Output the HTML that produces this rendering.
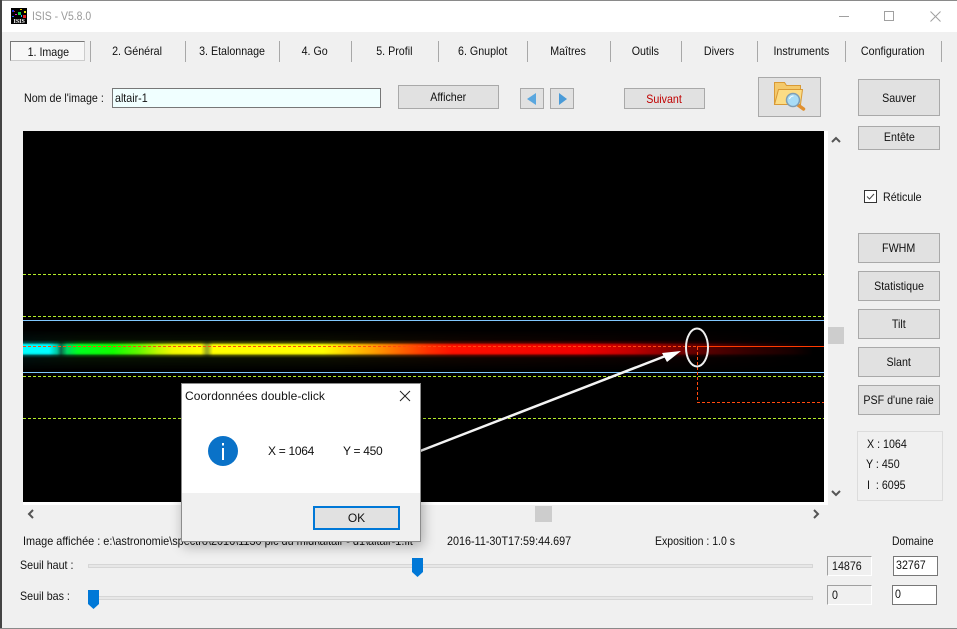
<!DOCTYPE html>
<html><head><meta charset="utf-8"><title>ISIS</title>
<style>
html,body{margin:0;padding:0;width:957px;height:629px;overflow:hidden;background:#f0f0f0}
body{position:relative;font-family:"Liberation Sans",sans-serif;font-size:12px;color:#111}
.t{position:absolute;white-space:nowrap;line-height:14px;transform:scaleX(.89);transform-origin:0 50%}
.b{position:absolute;box-sizing:border-box;background:#e1e1e1;border:1px solid #a9a9a9;text-align:center;white-space:nowrap}
.s{position:absolute;top:41px;width:1px;height:21px;background:#a8a8a8}
.c{position:absolute;white-space:nowrap;line-height:14px;text-align:center;top:44px}
.c span,.b span{display:inline-block;transform:scaleX(.89)}
.i{position:absolute;box-sizing:border-box;line-height:17px;padding-left:3px;overflow:hidden}
.i span{display:inline-block;transform:scaleX(.89);transform-origin:0 50%}
.ro{border:1px solid;border-color:#a0a0a0 #fff #fff #a0a0a0;background:#f0f0f0;padding-left:4px;padding-top:1px}
.rw{border:1px solid #777;background:#fff;padding-left:2px}
.tr{position:absolute;left:88px;width:725px;height:4px;background:#e7e7e7;border:1px solid #d6d6d6;box-sizing:border-box}
</style></head><body>
<!-- window frame -->
<div style="position:absolute;left:0;top:0;width:957px;height:1px;background:#8a8a8a"></div>
<div style="position:absolute;left:0;top:1px;width:957px;height:31px;background:#fff"></div>
<div style="position:absolute;left:0;top:0;width:2px;height:629px;background:#444"></div>
<div style="position:absolute;left:0;top:628px;width:957px;height:1px;background:#8a8a8a"></div>
<!-- app icon -->
<svg style="position:absolute;left:11px;top:8px" width="16" height="16" viewBox="0 0 16 16">
<rect width="16" height="16" fill="#000"/>
<rect x="1" y="2" width="2" height="2" fill="#2030e0"/><rect x="4" y="6" width="2" height="1" fill="#d020d0"/><rect x="9" y="1" width="2" height="1" fill="#e0c000"/>
<rect x="7" y="4" width="3" height="3" fill="#10d040"/><rect x="3" y="3" width="1" height="1" fill="#e02020"/><rect x="13" y="3" width="2" height="2" fill="#e0e000"/>
<rect x="12" y="7" width="3" height="3" fill="#e02020"/><rect x="1" y="8" width="2" height="1" fill="#2060ff"/><rect x="10" y="7" width="1" height="2" fill="#20c0ff"/>
<text x="2.5" y="15" font-size="6" font-weight="bold" fill="#fff" font-family="Liberation Serif,serif">ISIS</text>
</svg>
<div class="t" style="left:32px;top:9px;color:#9a9a9a;transform:scaleX(.87)">ISIS - V5.8.0</div>
<!-- window controls -->
<div style="position:absolute;left:839px;top:16px;width:10px;height:1px;background:#a0a0a0"></div>
<div style="position:absolute;left:884px;top:11px;width:10px;height:10px;box-sizing:border-box;border:1px solid #a0a0a0"></div>
<svg style="position:absolute;left:930px;top:11px" width="11" height="11"><path d="M.5.5l10 10M10.500.5l-10 10" stroke="#a0a0a0" fill="none"/></svg>
<!-- tabs -->
<div style="position:absolute;left:10px;top:41px;width:75px;height:20px;box-sizing:border-box;border:1px solid;border-color:#777 #ccc #ccc #777;background:#f7f7f7"></div>
<div class="c" style="left:9px;width:78px;top:45px"><span>1. Image</span></div>
<div class="s" style="left:90px"></div>
<div class="c" style="left:90px;width:95px"><span>2. Général</span></div>
<div class="s" style="left:185px"></div>
<div class="c" style="left:185px;width:94px"><span>3. Etalonnage</span></div>
<div class="s" style="left:279px"></div>
<div class="c" style="left:279px;width:72px"><span>4. Go</span></div>
<div class="s" style="left:351px"></div>
<div class="c" style="left:351px;width:87px"><span>5. Profil</span></div>
<div class="s" style="left:438px"></div>
<div class="c" style="left:438px;width:89px"><span>6. Gnuplot</span></div>
<div class="s" style="left:527px"></div>
<div class="c" style="left:527px;width:83px"><span>Maîtres</span></div>
<div class="s" style="left:610px"></div>
<div class="c" style="left:610px;width:71px"><span>Outils</span></div>
<div class="s" style="left:681px"></div>
<div class="c" style="left:681px;width:76px"><span>Divers</span></div>
<div class="s" style="left:757px"></div>
<div class="c" style="left:757px;width:88px"><span>Instruments</span></div>
<div class="s" style="left:845px"></div>
<div class="c" style="left:845px;width:96px"><span>Configuration</span></div>
<div class="s" style="left:941px"></div>
<!-- top row -->
<div class="t" style="left:24px;top:91px">Nom de l'image :</div>
<div style="position:absolute;left:112px;top:88px;width:269px;height:20px;box-sizing:border-box;border:1px solid #777;background:#f0ffff;line-height:18px;padding-left:2px"><span style="display:inline-block;transform:scaleX(.89);transform-origin:0 50%">altair-1</span></div>
<div class="b" style="left:398px;top:85px;width:101px;height:24px;line-height:22px"><span>Afficher</span></div>
<div class="b" style="left:520px;top:88px;width:24px;height:21px"><svg width="22" height="19" style="display:block"><path d="M6 10L15 4v12z" fill="#5aa7df"/></svg></div>
<div class="b" style="left:550px;top:88px;width:24px;height:21px"><svg width="22" height="19" style="display:block"><path d="M16 10L8 4v12z" fill="#4a9bd8"/></svg></div>
<div class="b" style="left:624px;top:88px;width:81px;height:21px;line-height:20px;color:#c00000"><span>Suivant</span></div>
<div class="b" style="left:758px;top:77px;width:63px;height:40px"></div>
<svg style="position:absolute;left:772px;top:80px" width="36" height="32" viewBox="0 0 36 32">
<path d="M2.500 2.500h10l2 3h14v19h-26z" fill="#f4c96b" stroke="#d99a35"/>
<path d="M2.500 24.500L6.500 9.500h24l-2 15z" fill="#fbdc85" stroke="#d99a35"/>
<path d="M26 25l5.500 4" stroke="#e09030" stroke-width="3.500" stroke-linecap="round"/>
<circle cx="21" cy="20" r="6.500" fill="#a8dcf6" stroke="#7f9db3" stroke-width="1.500"/>
<path d="M17.500 19a4 4 0 0 1 4-3" stroke="#fff" fill="none"/>
</svg>
<div class="b" style="left:858px;top:79px;width:82px;height:37px;line-height:36px"><span>Sauver</span></div>
<div class="b" style="left:858px;top:126px;width:82px;height:24px;line-height:21px"><span>Entête</span></div>
<!-- image -->
<div style="position:absolute;left:23px;top:131px;width:805px;height:374px;background:#fff"></div>
<div style="position:absolute;left:23px;top:131px;width:801px;height:371px;background:#000;overflow:hidden">
<div style="position:absolute;left:0;top:199px;width:801px;height:40px;background:linear-gradient(90deg,#001a18 0,#0a1d04 60px,#141800 300px,#1a0600 450px,#100000 650px,#000 780px);-webkit-mask-image:linear-gradient(180deg,transparent 0,#000 50%,transparent 100%);mask-image:linear-gradient(180deg,transparent 0,#000 50%,transparent 100%)"></div>
<div style="position:absolute;left:0;top:209px;width:801px;height:18px;background:linear-gradient(90deg,#00ffff 0,#00ffff 26px,#00c8a0 34px,#0a6a4a 38px,#00d860 44px,#00ff20 55px,#10ff00 90px,#60f800 115px,#c0f800 135px,#f0f800 150px,#ffff00 178px,#a0b020 183px,#a0b020 185px,#ffff00 190px,#ffff00 300px,#ffd000 325px,#ffa000 350px,#ff6000 380px,#ff3000 405px,#ff1000 430px,#f00000 560px,#c00000 610px,#800000 650px,#5a0000 680px,#300000 730px,#160000 770px,#000 790px);-webkit-mask-image:linear-gradient(180deg,transparent 0,rgba(0,0,0,.25) 15%,rgba(0,0,0,.9) 26%,#000 32%,#000 68%,rgba(0,0,0,.9) 76%,rgba(0,0,0,.25) 86%,transparent 100%);mask-image:linear-gradient(180deg,transparent 0,rgba(0,0,0,.25) 15%,rgba(0,0,0,.9) 26%,#000 32%,#000 68%,rgba(0,0,0,.9) 76%,rgba(0,0,0,.25) 86%,transparent 100%)"></div>
</div>
<svg style="position:absolute;left:0;top:0" width="957" height="629">
<g stroke="#b4ee28" stroke-width="1" stroke-dasharray="3 2" fill="none">
<path d="M23 274.500H824M23 316.500H824M23 376.500H824M23 418.500H824"/></g>
<path d="M23 320.500H824M23 372.500H824" stroke="#80c8ff" stroke-width="1"/>
<path d="M23 346.500H697" stroke="#ff4a10" stroke-dasharray="3 2"/>
<path d="M697 346.500H824" stroke="#ff3a00"/>
<path d="M697.500 347V402.500H824" stroke="#ff4a10" stroke-dasharray="3 2" fill="none"/>
<ellipse cx="697" cy="347.500" rx="11" ry="19" fill="none" stroke="#eee" stroke-width="2"/>
<path d="M415 453L668 355" stroke="#f4f4f4" stroke-width="2.500"/>
<path d="M681 351L662 353L667 362z" fill="#fff"/>
</svg>
<!-- scroll -->
<svg style="position:absolute;left:828px;top:134px" width="16" height="12"><path d="M4 8l4-4 4 4" stroke="#555" stroke-width="2" fill="none"/></svg>
<svg style="position:absolute;left:828px;top:488px" width="16" height="12"><path d="M4 3l4 4 4-4" stroke="#555" stroke-width="2" fill="none"/></svg>
<div style="position:absolute;left:828px;top:327px;width:16px;height:17px;background:#cdcdcd"></div>
<svg style="position:absolute;left:25px;top:506px" width="12" height="16"><path d="M8 4L4 8l4 4" stroke="#555" stroke-width="2" fill="none"/></svg>
<svg style="position:absolute;left:810px;top:506px" width="12" height="16"><path d="M4 4l4 4-4 4" stroke="#555" stroke-width="2" fill="none"/></svg>
<div style="position:absolute;left:535px;top:506px;width:17px;height:16px;background:#cdcdcd"></div>
<!-- right column -->
<div style="position:absolute;left:864px;top:190px;width:13px;height:13px;box-sizing:border-box;border:1px solid #333;background:#fff"><svg width="11" height="11" style="display:block"><path d="M2 5.500l2.500 2.500L9 3" stroke="#444" fill="none"/></svg></div>
<div class="t" style="left:883px;top:190px">Réticule</div>
<div class="b" style="left:858px;top:233px;width:82px;height:30px;line-height:28px"><span>FWHM</span></div>
<div class="b" style="left:858px;top:271px;width:82px;height:30px;line-height:28px"><span>Statistique</span></div>
<div class="b" style="left:858px;top:309px;width:82px;height:30px;line-height:28px"><span>Tilt</span></div>
<div class="b" style="left:858px;top:347px;width:82px;height:30px;line-height:28px"><span>Slant</span></div>
<div class="b" style="left:858px;top:385px;width:82px;height:30px;line-height:28px"><span>PSF d'une raie</span></div>
<div style="position:absolute;left:857px;top:431px;width:86px;height:70px;box-sizing:border-box;border:1px solid #dcdcdc"></div>
<div class="t" style="left:867px;top:437px">X : 1064</div>
<div class="t" style="left:866px;top:457px">Y : 450</div>
<div class="t" style="left:867px;top:478px">I &nbsp;: 6095</div>
<!-- bottom -->
<div class="t" style="left:23px;top:534px;transform:scaleX(.907)">Image affichée : e:\astronomie\spectro\2016\1130 pic du midi\altair - d1\altair-1.fit</div>
<div class="t" style="left:447px;top:534px;transform:scaleX(.9)">2016-11-30T17:59:44.697</div>
<div class="t" style="left:655px;top:534px;transform:scaleX(.875)">Exposition : 1.0 s</div>
<div class="t" style="left:892px;top:534px;transform:scaleX(.865)">Domaine</div>
<div class="t" style="left:20px;top:558px">Seuil haut :</div>
<div class="t" style="left:20px;top:589px">Seuil bas :</div>
<div class="tr" style="top:564px"></div>
<div class="tr" style="top:596px"></div>
<svg style="position:absolute;left:412px;top:558px" width="12" height="20"><path d="M0 0h11v14l-5.500 5L0 14z" fill="#0078d7"/></svg>
<svg style="position:absolute;left:88px;top:590px" width="12" height="20"><path d="M0 0h11v14l-5.500 5L0 14z" fill="#0078d7"/></svg>
<div class="i ro" style="left:827px;top:556px;width:45px;height:20px"><span>14876</span></div>
<div class="i rw" style="left:893px;top:556px;width:45px;height:20px"><span>32767</span></div>
<div class="i ro" style="left:827px;top:585px;width:45px;height:20px"><span>0</span></div>
<div class="i rw" style="left:892px;top:585px;width:45px;height:20px"><span>0</span></div>
<!-- dialog -->
<div style="position:absolute;left:181px;top:383px;width:240px;height:159px;box-sizing:border-box;border:1px solid #8c8c8c;background:#fff;box-shadow:2px 4px 12px rgba(0,0,0,.3)">
<div style="position:absolute;left:0;top:109px;width:238px;height:48px;background:#f0f0f0"></div>
</div>
<div class="t" style="left:185px;top:389px;letter-spacing:.05px;transform:none">Coordonnées double-click</div>
<svg style="position:absolute;left:399px;top:390px" width="12" height="12"><path d="M1 1l10 10M11 1L1 11" stroke="#222" fill="none"/></svg>
<svg style="position:absolute;left:208px;top:436px" width="30" height="30"><circle cx="15" cy="15" r="15" fill="#0a72c8"/><rect x="14" y="12" width="2" height="12" fill="#fff"/><rect x="14" y="7" width="2" height="2.500" fill="#fff"/></svg>
<div class="t" style="left:268px;top:444px;transform:none;letter-spacing:-.3px">X = 1064</div>
<div class="t" style="left:343px;top:444px;transform:none;letter-spacing:-.3px">Y = 450</div>
<div style="position:absolute;left:313px;top:506px;width:87px;height:24px;box-sizing:border-box;border:2px solid #0078d7;background:#e1e1e1;text-align:center;line-height:20px">OK</div>
</body></html>
